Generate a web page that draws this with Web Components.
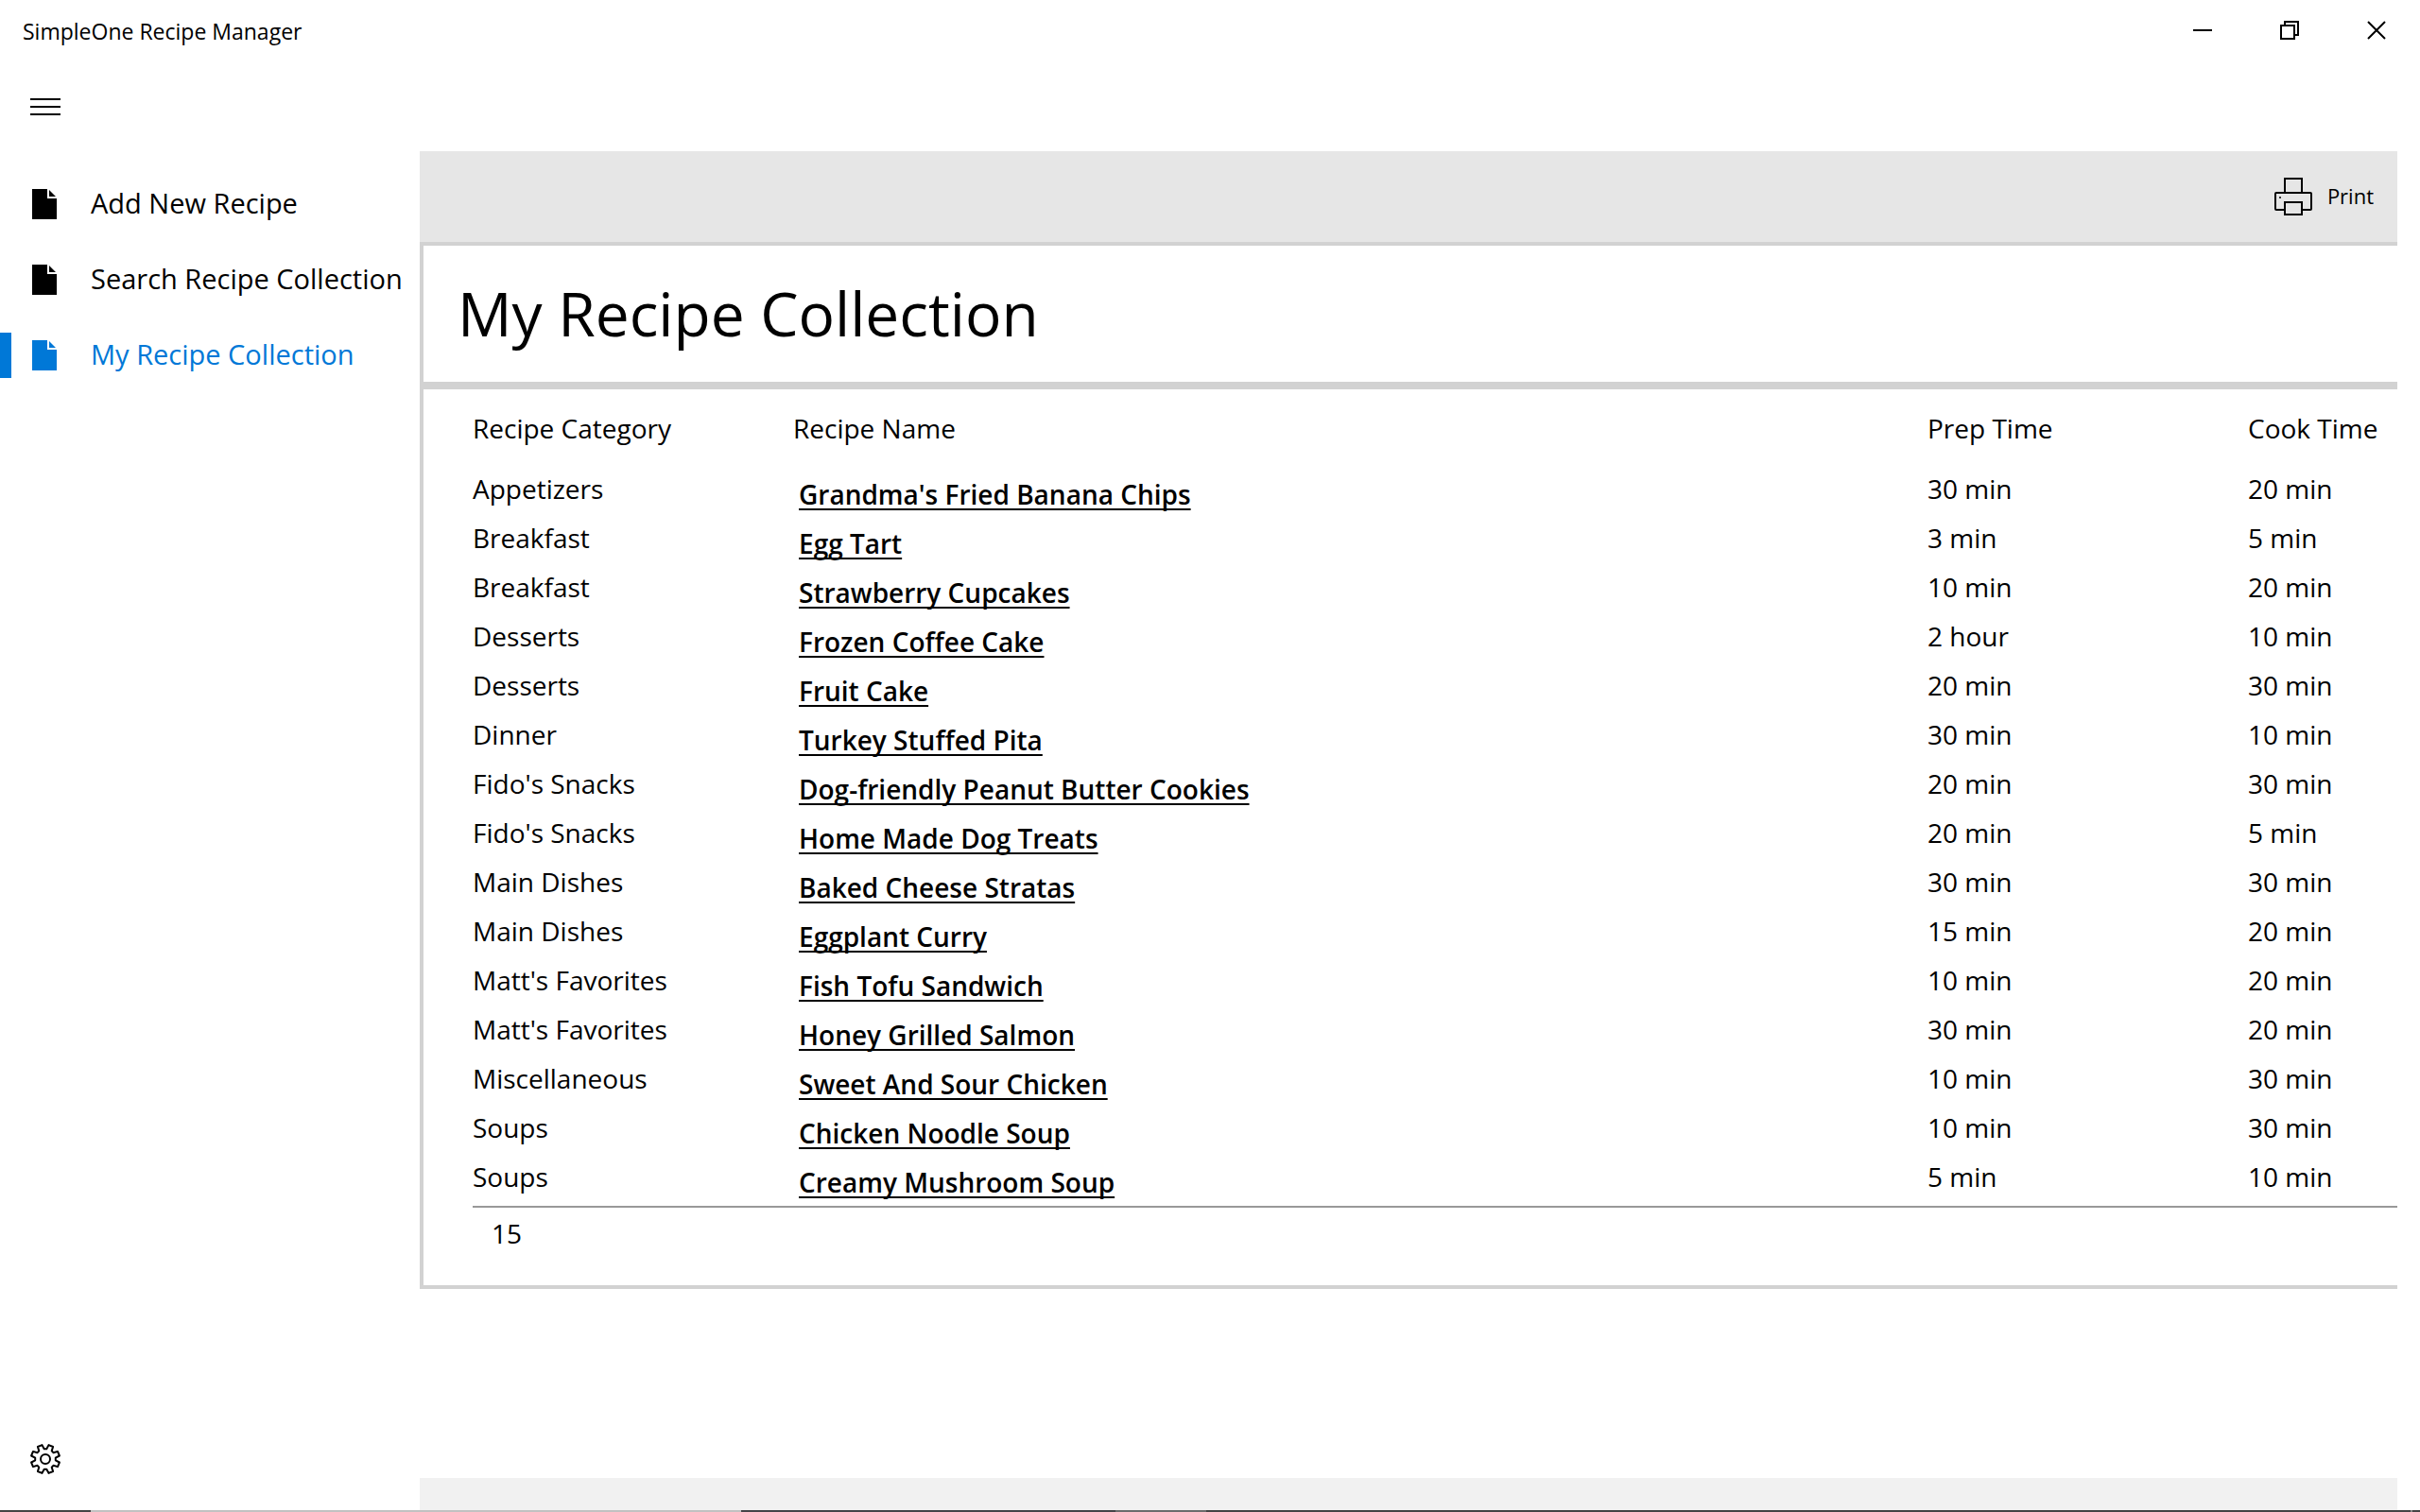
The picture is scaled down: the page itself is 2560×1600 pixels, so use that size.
<!DOCTYPE html>
<html lang="en">
<head>
<meta charset="utf-8">
<title>SimpleOne Recipe Manager</title>
<style>
  body {
    margin: 0;
    background: #fff;
    color: #000;
    font-family: "Open Sans", "Noto Sans", sans-serif;
    font-size: 28px;
    line-height: 42px;
  }
</style>
</head>
<body>
<app-window>
  <title-bar slot="title">SimpleOne Recipe Manager</title-bar>
  <nav-pane slot="nav">
    <nav-item>Add New Recipe</nav-item>
    <nav-item>Search Recipe Collection</nav-item>
    <nav-item active>My Recipe Collection</nav-item>
  </nav-pane>
  <command-bar></command-bar>
  <page-panel>
    <span slot="heading">My Recipe Collection</span>
    <recipe-table></recipe-table>
  </page-panel>
</app-window>

<script>
  // Window frame: title bar on top, navigation on the left, page on the right
  class AppWindow extends HTMLElement {
    constructor() {
      super();
      this.attachShadow({ mode: 'open' });
    }

    connectedCallback() {
      this.shadowRoot.innerHTML = `
        <style>
          :host {
            display: flex;
            flex-direction: column;
            min-height: 100vh;
          }

          .body {
            flex: 1;
            display: grid;
            grid-template-columns: 444px minmax(0, 1fr);
          }

          main {
            display: flex;
            flex-direction: column;
            margin-right: 24px;
            padding-top: 96px;
          }

          .status {
            height: 34px;
            margin-top: auto;
            background: #f1f1f1;
          }

          .edge {
            height: 2px;
            background: linear-gradient(to right,
              #444 96px, #c1c1c1 96px 784px, #444447 784px 1180px,
              #6c6c6c 1180px 1276px, #444 1276px calc(100% - 10px),
              #888 calc(100% - 10px) calc(100% - 8px), #444 calc(100% - 8px));
          }
        </style>
        <slot name="title"></slot>
        <div class="body">
          <slot name="nav"></slot>
          <main>
            <slot></slot>
            <div class="status"></div>
          </main>
        </div>
        <div class="edge"></div>
      `;
    }
  }

  class TitleBar extends HTMLElement {
    constructor() {
      super();
      this.attachShadow({ mode: 'open' });
    }

    connectedCallback() {
      this.shadowRoot.innerHTML = `
        <style>
          :host {
            display: flex;
            align-items: center;
            height: 64px;
            font-size: 23px;
          }

          .name {
            flex: 1;
            padding-left: 24px;
            padding-top: 2px;
          }

          button {
            display: flex;
            align-items: center;
            justify-content: center;
            width: 92px;
            height: 64px;
            padding: 0;
            border: none;
            background: none;
          }

          svg {
            fill: none;
            stroke: #000;
            stroke-width: 2;
          }
        </style>
        <div class="name"><slot></slot></div>
        <button aria-label="Minimize"><svg width="20" height="20"><path d="M0 10H20"/></svg></button>
        <button aria-label="Restore"><svg width="20" height="20"><path d="M1 5H15V19H1ZM5 5V1H19V15H15"/></svg></button>
        <button aria-label="Close"><svg width="20" height="20"><path d="M1 1L19 19M19 1L1 19"/></svg></button>
      `;
    }
  }

  class NavPane extends HTMLElement {
    constructor() {
      super();
      this.attachShadow({ mode: 'open' });
    }

    connectedCallback() {
      this.shadowRoot.innerHTML = `
        <style>
          :host {
            display: flex;
            flex-direction: column;
          }

          button {
            display: flex;
            align-items: center;
            justify-content: center;
            width: 96px;
            height: 80px;
            padding: 0;
            border: none;
            background: none;
          }

          .menu {
            height: 98px;
          }

          nav {
            margin-top: 14px;
          }

          .settings {
            margin-top: auto;
            margin-bottom: 14px;
          }

          svg {
            fill: none;
            stroke: #000;
            stroke-width: 2;
          }
        </style>
        <button class="menu" aria-label="Menu">
          <svg width="32" height="18"><path d="M0 1H32M0 9H32M0 17H32"/></svg>
        </button>
        <nav><slot></slot></nav>
        <button class="settings" aria-label="Settings">
          <svg width="34" height="34" viewBox="-17 -17 34 34" stroke-linejoin="round">
            <path d="M-3.5-14.9L-1.3-10.8H1.3L3.5-14.9L8.1-13L6.7-8.6L8.6-6.7L13-8.1L14.9-3.5L10.8-1.3V1.3L14.9 3.5L13 8.1L8.6 6.7L6.7 8.6L8.1 13L3.5 14.9L1.3 10.8H-1.3L-3.5 14.9L-8.1 13L-6.7 8.6L-8.6 6.7L-13 8.1L-14.9 3.5L-10.8 1.3V-1.3L-14.9-3.5L-13-8.1L-8.6-6.7L-6.7-8.6L-8.1-13Z"/>
            <circle r="5"/>
          </svg>
        </button>
      `;
    }
  }

  class NavItem extends HTMLElement {
    constructor() {
      super();
      this.attachShadow({ mode: 'open' });
    }

    connectedCallback() {
      this.shadowRoot.innerHTML = `
        <style>
          :host {
            display: block;
          }

          a {
            display: flex;
            align-items: center;
            height: 80px;
            color: inherit;
            font-size: 29px;
            text-decoration: none;
            white-space: nowrap;
          }

          a::before {
            content: "";
            width: 12px;
            height: 48px;
            margin-right: 22px;
          }

          :host([active]) a {
            color: #0078d7;
          }

          :host([active]) a::before {
            background: #0078d7;
          }

          svg {
            margin-right: 36px;
            fill: currentColor;
          }

          .label {
            padding-bottom: 2px;
          }
        </style>
        <a href="#">
          <svg width="26" height="32"><path d="M0 0H16V10H26V32H0ZM18 1L25 8H18Z"/></svg>
          <span class="label"><slot></slot></span>
        </a>
      `;
    }
  }

  class CommandBar extends HTMLElement {
    constructor() {
      super();
      this.attachShadow({ mode: 'open' });
    }

    connectedCallback() {
      this.shadowRoot.innerHTML = `
        <style>
          :host {
            display: flex;
            justify-content: flex-end;
            height: 96px;
            background: #e6e6e6;
          }

          button {
            display: flex;
            align-items: center;
            gap: 16px;
            padding: 0 25px;
            border: none;
            background: none;
            color: inherit;
            font: inherit;
            font-size: 22px;
          }

          svg {
            fill: #e6e6e6;
            stroke: #000;
            stroke-width: 2;
          }

          .label {
            padding-bottom: 2px;
          }
        </style>
        <button>
          <svg width="40" height="40">
            <rect x="11" y="1" width="18" height="16"/>
            <rect x="1" y="16" width="38" height="18" rx="1"/>
            <rect x="11" y="26" width="18" height="13"/>
            <circle cx="6" cy="21" r="1" fill="#000" stroke="none"/>
          </svg>
          <span class="label">Print</span>
        </button>
      `;
    }
  }

  class PagePanel extends HTMLElement {
    constructor() {
      super();
      this.attachShadow({ mode: 'open' });
    }

    connectedCallback() {
      this.shadowRoot.innerHTML = `
        <style>
          :host {
            display: block;
            border: 4px solid #d2d2d2;
            border-right: none;
          }

          h1 {
            margin: 0;
            padding: 28px 36px;
            border-bottom: 8px solid #d2d2d2;
            font-size: 64px;
            font-weight: 400;
            line-height: 88px;
          }

          section {
            padding: 20px 0 34px 52px;
          }
        </style>
        <h1><slot name="heading"></slot></h1>
        <section><slot></slot></section>
      `;
    }
  }

  const recipes = [
    ["Appetizers", "Grandma's Fried Banana Chips", "30 min", "20 min"],
    ["Breakfast", "Egg Tart", "3 min", "5 min"],
    ["Breakfast", "Strawberry Cupcakes", "10 min", "20 min"],
    ["Desserts", "Frozen Coffee Cake", "2 hour", "10 min"],
    ["Desserts", "Fruit Cake", "20 min", "30 min"],
    ["Dinner", "Turkey Stuffed Pita", "30 min", "10 min"],
    ["Fido's Snacks", "Dog-friendly Peanut Butter Cookies", "20 min", "30 min"],
    ["Fido's Snacks", "Home Made Dog Treats", "20 min", "5 min"],
    ["Main Dishes", "Baked Cheese Stratas", "30 min", "30 min"],
    ["Main Dishes", "Eggplant Curry", "15 min", "20 min"],
    ["Matt's Favorites", "Fish Tofu Sandwich", "10 min", "20 min"],
    ["Matt's Favorites", "Honey Grilled Salmon", "30 min", "20 min"],
    ["Miscellaneous", "Sweet And Sour Chicken", "10 min", "30 min"],
    ["Soups", "Chicken Noodle Soup", "10 min", "30 min"],
    ["Soups", "Creamy Mushroom Soup", "5 min", "10 min"]
  ];

  class RecipeTable extends HTMLElement {
    constructor() {
      super();
      this.attachShadow({ mode: 'open' });
    }

    connectedCallback() {
      const rows = recipes.map(([category, name, prep, cook]) => `
        <tr>
          <td>${category}</td>
          <td class="name"><a href="#">${name}</a></td>
          <td>${prep}</td>
          <td>${cook}</td>
        </tr>`).join('');

      this.shadowRoot.innerHTML = `
        <style>
          :host {
            display: block;
          }

          table {
            width: 100%;
            table-layout: fixed;
            border-spacing: 0;
          }

          th, td {
            height: 52px;
            padding: 0;
            font-weight: 400;
            text-align: left;
            vertical-align: top;
            white-space: nowrap;
          }

          th {
            height: 64px;
          }

          .side {
            width: 339px;
          }

          .last {
            width: 158px;
          }

          .name {
            height: 46px;
            padding-top: 6px;
            padding-left: 6px;
          }

          a {
            color: #000;
            font-weight: 600;
            text-decoration: underline;
            text-decoration-thickness: 2px;
            text-decoration-skip-ink: none;
            text-underline-offset: 4px;
          }

          tfoot td {
            height: 42px;
            padding: 6px 0 0 20px;
            border-top: 2px solid #999;
          }
        </style>
        <table>
          <thead>
            <tr>
              <th class="side">Recipe Category</th>
              <th>Recipe Name</th>
              <th class="side">Prep Time</th>
              <th class="last">Cook Time</th>
            </tr>
          </thead>
          <tbody>${rows}</tbody>
          <tfoot>
            <tr><td colspan="4">${recipes.length}</td></tr>
          </tfoot>
        </table>
      `;
    }
  }

  customElements.define('app-window', AppWindow);
  customElements.define('title-bar', TitleBar);
  customElements.define('nav-pane', NavPane);
  customElements.define('nav-item', NavItem);
  customElements.define('command-bar', CommandBar);
  customElements.define('page-panel', PagePanel);
  customElements.define('recipe-table', RecipeTable);
</script>
</body>
</html>
